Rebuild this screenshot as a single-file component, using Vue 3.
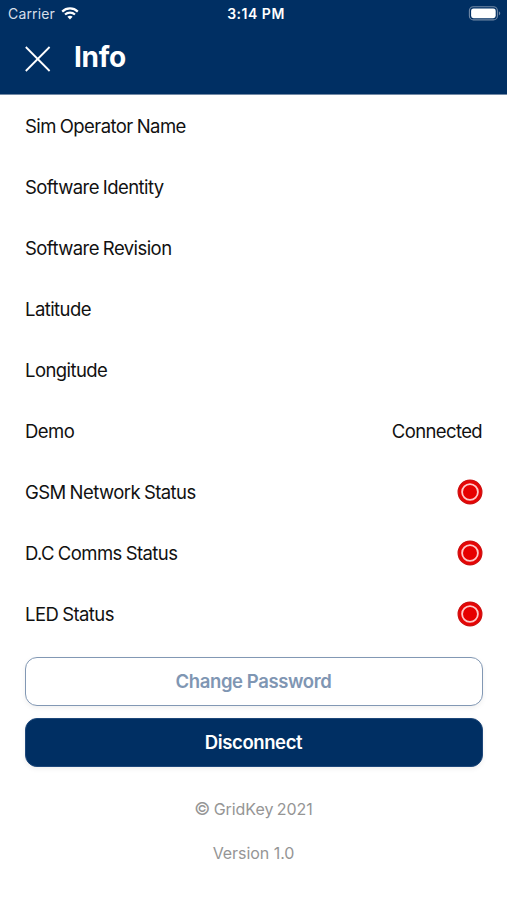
<script setup>
const rows = [
  { label: 'Sim Operator Name' },
  { label: 'Software Identity' },
  { label: 'Software Revision' },
  { label: 'Latitude' },
  { label: 'Longitude' },
  { label: 'Demo', value: 'Connected' },
  { label: 'GSM Network Status', alert: true },
  { label: 'D.C Comms Status', alert: true },
  { label: 'LED Status', alert: true },
]
</script>

<template>
  <div class="screen">
    <header class="header">
      <div class="status-bar">
        <div class="carrier">
          <span class="carrier-name">Carrier</span>
          <svg class="wifi" width="18" height="13" viewBox="0 0 18 13" fill="none" stroke="#fff">
            <path d="M1.2 4.6C5.6 .4 12.4 .4 16.8 4.6" stroke-width="2.2" />
            <path d="M4 7.6C6.8 4.9 11.2 4.9 14 7.6" stroke-width="2.1" />
            <path d="M6.4 9.8C7.9 8.4 10.1 8.4 11.6 9.8L9 12.4Z" fill="#fff" stroke="none" />
          </svg>
        </div>
        <span class="time">3:14 PM</span>
        <svg class="battery" width="33" height="15" viewBox="0 0 33 15">
          <rect x="1.4" y=".7" width="28" height="13.2" rx="4" fill="none" stroke="#7189a6" stroke-width="1.1" />
          <rect x="3.1" y="2.4" width="24.6" height="9.8" rx="2.4" fill="#fff" />
          <path d="M30.9 5.2C32.7 6.1 32.7 8.5 30.9 9.4Z" fill="#7189a6" />
        </svg>
      </div>
      <div class="nav">
        <svg class="close" width="26" height="26" viewBox="0 0 26 26">
          <path d="M.8 1L24.6 25M24.6 1L.8 25" stroke="#fff" stroke-width="1.8" />
        </svg>
        <h1 class="title">Info</h1>
      </div>
    </header>
    <main class="content">
      <div v-for="row in rows" :key="row.label" class="row">
        <span>{{ row.label }}</span>
        <span v-if="row.value" class="value">{{ row.value }}</span>
        <svg v-if="row.alert" width="26" height="26" viewBox="0 0 26 26">
          <circle cx="13" cy="13" r="11.9" fill="#e60505" stroke="#cc1010" stroke-width="1.2" />
          <circle cx="13" cy="13" r="7.9" fill="#e60000" stroke="#ffc9c9" stroke-width="1.8" />
        </svg>
      </div>
      <div class="actions">
        <button class="button outline">Change Password</button>
        <button class="button solid">Disconnect</button>
      </div>
    </main>
    <footer class="footer">
      <span class="copyright"><span class="mark">©</span> GridKey 2021</span>
      <span class="version">Version 1.0</span>
    </footer>
  </div>
</template>

<style>
body {
  background: #fff;
}
</style>

<style scoped>
.screen {
  width: 507px;
  height: 900px;
  overflow: hidden;
  background: #fff;
  color: #111;
  font-family: Inter, "Liberation Sans", sans-serif;
}
.header {
  box-sizing: border-box;
  height: 95px;
  background: #002f63;
  border-bottom: 1px solid #7289a5;
  color: #fff;
}
.status-bar {
  display: grid;
  grid-template-columns: 1fr auto 1fr;
  align-items: center;
  height: 27px;
  padding: 0 6px 0 8px;
  font-size: 14px;
}
.carrier {
  display: flex;
  align-items: center;
  gap: 6px;
}
.carrier-name {
  color: #d7dfe9;
  letter-spacing: 0.15px;
}
.time {
  padding-left: 3px;
  font-size: 14px;
  font-weight: 600;
  letter-spacing: 0.5px;
}
.battery {
  justify-self: end;
}
.nav {
  display: flex;
  align-items: center;
  height: 64px;
  padding-left: 25px;
  gap: 23px;
}
.title {
  margin: 0 0 4px;
  font-size: 28px;
  line-height: 34px;
  font-weight: 700;
  letter-spacing: -0.3px;
}
.content {
  padding: 0 24px 0 25px;
}
.row {
  display: flex;
  align-items: center;
  justify-content: space-between;
  height: 61.1px;
  font-size: 18.5px;
  letter-spacing: -0.57px;
  word-spacing: -0.7px;
}
.value {
  padding-right: 1px;
  letter-spacing: -0.63px;
}
.actions {
  display: flex;
  flex-direction: column;
  gap: 12px;
  padding-top: 12px;
}
.button {
  box-sizing: border-box;
  height: 49px;
  padding: 0 1px 0 0;
  border-radius: 12px;
  font: 600 18.5px Inter, "Liberation Sans", sans-serif;
  letter-spacing: -0.4px;
  box-shadow: 0 2px 5px #00000010;
}
.outline {
  border: 1px solid #8298b4;
  background: #fff;
  color: #7f96b3;
}
.solid {
  border: 1px solid #1d477a;
  background: #002f63;
  color: #fff;
}
.footer {
  display: flex;
  flex-direction: column;
  align-items: center;
  gap: 22px;
  padding-top: 31px;
  color: #959595;
  font-size: 16px;
  line-height: 22px;
  letter-spacing: -0.05px;
}
.copyright {
  word-spacing: -1px;
}
.mark {
  font-size: 17.5px;
  line-height: 1;
}
</style>
